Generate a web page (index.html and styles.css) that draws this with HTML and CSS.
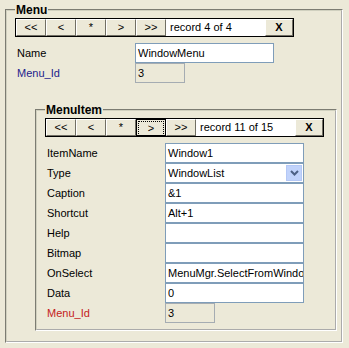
FILE: index.html
```html
<!DOCTYPE html>
<html lang="en">
<head>
    <meta charset="UTF-8">
    <title>Menu</title>
    <link rel="stylesheet" href="styles.css">
</head>
<body>

<fieldset class="group outer">
    <legend>Menu</legend>
    <div class="navbar">
        <button class="nav">&lt;&lt;</button>
        <button class="nav">&lt;</button>
        <button class="nav">*</button>
        <button class="nav">&gt;</button>
        <button class="nav">&gt;&gt;</button>
        <span class="record">record 4 of 4</span>
        <button class="close">X</button>
    </div>
    <div class="rows">
        <label>Name</label>
        <span class="field wide">WindowMenu</span>
        <label class="key">Menu_Id</label>
        <span class="field ro">3</span>
    </div>

    <fieldset class="group inner">
        <legend>MenuItem</legend>
        <div class="navbar">
            <button class="nav">&lt;&lt;</button>
            <button class="nav">&lt;</button>
            <button class="nav">*</button>
            <button class="nav pressed"><span class="focus">&gt;</span></button>
            <button class="nav">&gt;&gt;</button>
            <span class="record">record 11 of 15</span>
            <button class="close">X</button>
        </div>
        <div class="rows">
            <label>ItemName</label>
            <span class="field wide">Window1</span>
            <label>Type</label>
            <span class="field wide select">WindowList
                <span class="drop">
                    <svg width="9" height="6" viewBox="0 0 9 6"><path d="M1 1 L4.5 4.5 L8 1" fill="none" stroke="#4d6185" stroke-width="2"/></svg>
                </span>
            </span>
            <label>Caption</label>
            <span class="field wide">&amp;1</span>
            <label>Shortcut</label>
            <span class="field wide">Alt+1</span>
            <label>Help</label>
            <span class="field wide"></span>
            <label>Bitmap</label>
            <span class="field wide"></span>
            <label>OnSelect</label>
            <span class="field wide">MenuMgr.SelectFromWindo</span>
            <label>Data</label>
            <span class="field wide">0</span>
            <label class="fk">Menu_Id</label>
            <span class="field ro">3</span>
        </div>
    </fieldset>
</fieldset>

</body>
</html>
```

FILE: styles.css
```css
body {
    margin: 0;
    background: #ece9d8;
    font-family: "Liberation Sans", Arial, sans-serif;
    font-size: 11px;
    color: #000;
}

.group {
    border: 2px groove #f4f3ee;
    border-color: #d0d0bf #fff #fff #d0d0bf;
    margin: 0;
    min-width: 0;
}

.group legend {
    font-weight: bold;
    font-size: 12px;
    line-height: 14px;
    padding: 0 1px;
}

.outer {
    margin: 3px 6px 0 5px;
    padding: 0 4px 8px 8px;
    height: 340px;
    box-sizing: border-box;
}

.inner {
    margin: 20px 0 0 20px;
    padding: 0 4px 6px 8px;
}

.navbar {
    display: flex;
    width: 279px;
    height: 19px;
    border: 1px solid #000;
    box-sizing: border-box;
    margin-top: 1px;
}

.nav, .close {
    width: 30px;
    height: 17px;
    padding: 0;
    border: 1px solid;
    border-color: #fff #716f64 #716f64 #fff;
    background: #ece9d8;
    font-family: "Liberation Sans", Arial, sans-serif;
    font-size: 11px;
    line-height: 15px;
    color: #000;
}

.close {
    width: 28px;
    font-weight: bold;
}

.pressed {
    border-color: #000;
    padding: 1px;
}

.focus {
    display: block;
    height: 13px;
    line-height: 13px;
    border: 1px dotted #000;
}

.record {
    flex: 1;
    background: #fff;
    line-height: 17px;
    padding-left: 4px;
}

.rows {
    display: grid;
    grid-template-columns: 118px auto;
    grid-auto-rows: 20px;
    margin-top: 6px;
    padding-left: 2px;
    align-items: center;
}

.rows label {
    line-height: 20px;
}

.key {
    color: #1c1c8c;
}

.fk {
    color: #c42020;
}

.field {
    box-sizing: border-box;
    height: 20px;
    line-height: 18px;
    border: 1px solid #7f9db9;
    background: #fff;
    padding-left: 2px;
    white-space: nowrap;
    overflow: hidden;
}

.wide {
    width: 139px;
}

.ro {
    width: 50px;
    background: #ece9d8;
    border-color: #a5acb2;
}

.select {
    display: flex;
    align-items: center;
    justify-content: space-between;
    padding-right: 1px;
}

.drop {
    width: 16px;
    height: 16px;
    background: #c1d3fb;
    border: 1px solid #b4c8f6;
    box-sizing: border-box;
    display: flex;
    align-items: center;
    justify-content: center;
}
```
